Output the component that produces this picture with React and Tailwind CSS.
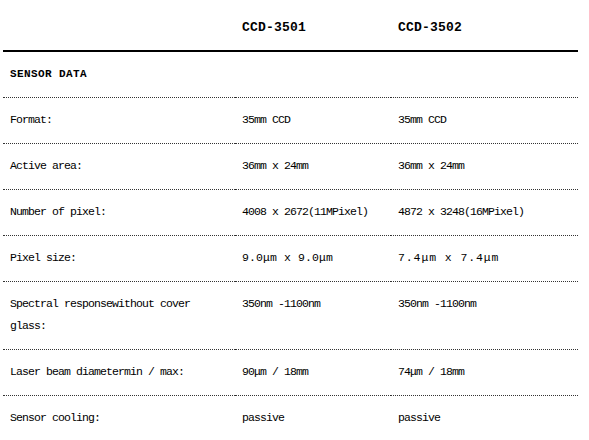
import React from "react";

const rows = [
  ["Format:", "35mm CCD", "35mm CCD"],
  ["Active area:", "36mm x 24mm", "36mm x 24mm"],
  ["Number of pixel:", "4008 x 2672(11MPixel)", "4872 x 3248(16MPixel)"],
  ["Pixel size:", "9.0μm x 9.0μm", "7.4μm x 7.4μm", true],
  ["Spectral responsewithout cover glass:", "350nm -1100nm", "350nm -1100nm"],
  ["Laser beam diametermin / max:", "90μm / 18mm", "74μm / 18mm"],
  ["Sensor cooling:", "passive", "passive"],
];

const cellBase =
  "pl-[7px] pr-[6px] pt-[11px] pb-[12px] leading-[22px] border-b border-dotted border-[#333]";

export default function App() {
  return (
    <div
      className="w-[589px] h-[440px] bg-white overflow-hidden text-black"
      style={{ fontFamily: '"Liberation Mono", "DejaVu Sans Mono", monospace' }}
    >
      <div className="ml-[3px] w-[575px] flex flex-col">
        <div className="flex border-b-2 border-black">
          <div className="w-[232px] pt-[17px] pb-[11px] leading-[22px]">&nbsp;</div>
          <div className="w-[156px] pl-[7px] pt-[17px] pb-[11px] leading-[22px] text-[13px] font-bold tracking-[0.2px]">
            CCD-3501
          </div>
          <div className="w-[187px] pl-[7px] pt-[17px] pb-[11px] leading-[22px] text-[13px] font-bold tracking-[0.2px]">
            CCD-3502
          </div>
        </div>
        <div className="flex">
          <div className={`w-[232px] ${cellBase} text-[11px] font-bold tracking-[0.4px]`}>
            SENSOR DATA
          </div>
          <div className={`w-[156px] ${cellBase}`}>&nbsp;</div>
          <div className={`w-[187px] ${cellBase}`}>&nbsp;</div>
        </div>
        {rows.map(([a, b, c, wide], i) => (
          <div key={i} className="flex text-[11.5px] tracking-[-0.9px]">
            <div className={`w-[232px] ${cellBase}`}>{a}</div>
            <div className={`w-[156px] ${cellBase} ${wide ? "tracking-[0.1px]" : ""}`}>{b}</div>
            <div className={`w-[187px] ${cellBase} ${wide ? "tracking-[0.9px]" : ""}`}>{c}</div>
          </div>
        ))}
      </div>
    </div>
  );
}
